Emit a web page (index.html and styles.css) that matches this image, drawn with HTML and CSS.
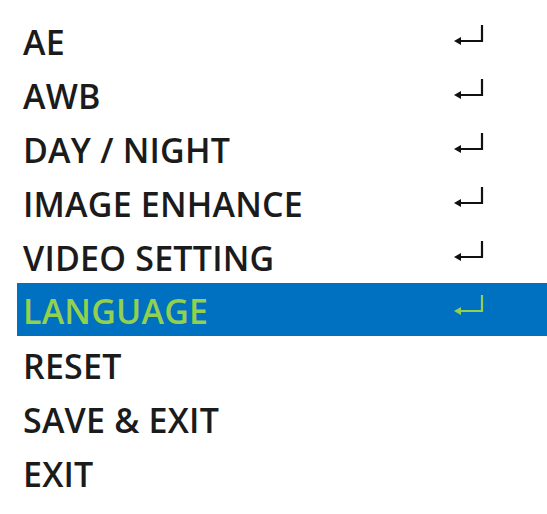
FILE: index.html
```html
<!DOCTYPE html>
<html>
<head>
<meta charset="utf-8">
<link rel="stylesheet" href="styles.css">
</head>
<body>
<ul class="menu">
  <li class="row"><span class="label">AE</span><svg class="enter" viewBox="0 0 32 20"><path d="M29 0V16H3"/><path class="head" d="M1 16L8 12V20Z"/></svg></li>
  <li class="row"><span class="label">AWB</span><svg class="enter" viewBox="0 0 32 20"><path d="M29 0V16H3"/><path class="head" d="M1 16L8 12V20Z"/></svg></li>
  <li class="row"><span class="label">DAY / NIGHT</span><svg class="enter" viewBox="0 0 32 20"><path d="M29 0V16H3"/><path class="head" d="M1 16L8 12V20Z"/></svg></li>
  <li class="row"><span class="label">IMAGE ENHANCE</span><svg class="enter" viewBox="0 0 32 20"><path d="M29 0V16H3"/><path class="head" d="M1 16L8 12V20Z"/></svg></li>
  <li class="row"><span class="label">VIDEO SETTING</span><svg class="enter" viewBox="0 0 32 20"><path d="M29 0V16H3"/><path class="head" d="M1 16L8 12V20Z"/></svg></li>
  <li class="row active"><span class="label">LANGUAGE</span><svg class="enter" viewBox="0 0 32 20"><path d="M29 0V16H3"/><path class="head" d="M1 16L8 12V20Z"/></svg></li>
  <li class="row"><span class="label">RESET</span></li>
  <li class="row"><span class="label">SAVE &amp; EXIT</span></li>
  <li class="row"><span class="label">EXIT</span></li>
</ul>
</body>
</html>
```
FILE: styles.css
```css
html, body {
  margin: 0;
  padding: 0;
  background: #ffffff;
}
body {
  font-family: "Open Sans", "Noto Sans", sans-serif;
  color: #1b1b1b;
}
.menu {
  list-style: none;
  margin: 0;
  padding: 13px 0 0 17px;
}
.row {
  display: flex;
  align-items: center;
  height: 54px;
}
.label {
  font-size: 34px;
  font-weight: 600;
  padding-left: 6px;
  padding-top: 3px;
  width: 430px;
  letter-spacing: 0.2px;
}
.enter {
  align-self: flex-start;
  width: 32px;
  height: 20px;
  margin-top: 12px;
  overflow: visible;
}
.enter path {
  fill: none;
  stroke: #111;
  stroke-width: 2.2;
}
.enter .head {
  fill: #111;
  stroke: none;
}
.active {
  background: #0070c0;
  height: 53px;
  margin-bottom: 1px;
}
.active .label {
  color: #92d050;
}
.active .enter path {
  stroke: #92d050;
}
.active .enter .head {
  fill: #92d050;
  stroke: none;
}
```
